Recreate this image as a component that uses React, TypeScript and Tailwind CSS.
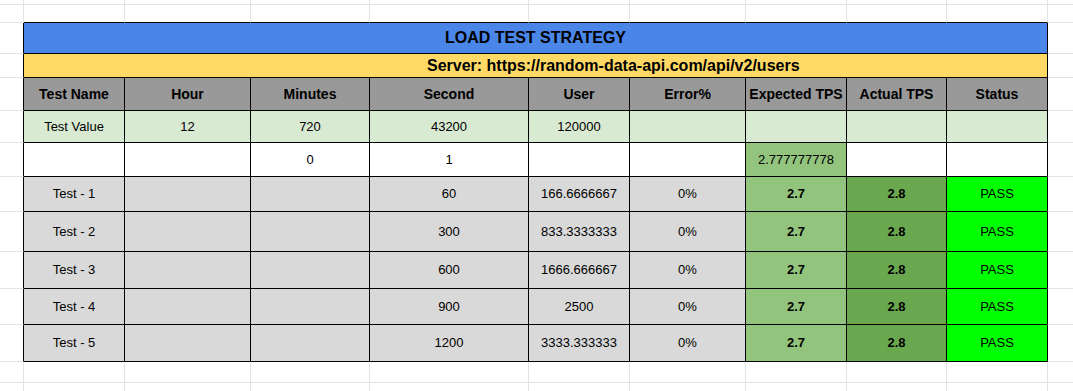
/** Load test strategy sheet, drawn as a spreadsheet grid. */

const COLS = [
  'w-[24px]',
  'w-[101px]',
  'w-[126px]',
  'w-[119px]',
  'w-[159px]',
  'w-[101px]',
  'w-[116px]',
  'w-[101px]',
  'w-[100px]',
  'w-[101px]',
  'w-[26px]',
]

const HEADERS = ['Test Name', 'Hour', 'Minutes', 'Second', 'User', 'Error%', 'Expected TPS', 'Actual TPS', 'Status']

const TESTS = [
  { name: 'Test - 1', sec: '60', user: '166.6666667', h: 'h-[35px]' },
  { name: 'Test - 2', sec: '300', user: '833.3333333', h: 'h-[40px]' },
  { name: 'Test - 3', sec: '600', user: '1666.666667', h: 'h-[37px]' },
  { name: 'Test - 4', sec: '900', user: '2500', h: 'h-[36px]' },
  { name: 'Test - 5', sec: '1200', user: '3333.333333', h: 'h-[37px]' },
]

interface CellProps {
  w: string
  className?: string
  children?: React.ReactNode
}

/** One bordered cell of the table. */
function Cell({ w, className = '', children }: CellProps) {
  return (
    <div className={`${w} shrink-0 h-full flex items-center justify-center border-r border-b border-black ${className}`}>
      {children}
    </div>
  )
}

/** Grey gutter cell left of the table, its right edge is the table's border. */
function LeftGutter() {
  return <div className="w-[24px] shrink-0 h-full border-r border-b border-r-black border-b-[#e2e2e2]" />
}

function RightGutter() {
  return <div className="w-[26px] shrink-0 h-full border-r border-b border-[#e2e2e2]" />
}

/** A row of empty sheet cells outside the table. */
function BlankRow({ h, edge = false }: { h: string; edge?: boolean }) {
  return (
    <div className={`flex ${h}`}>
      {COLS.map((w, i) => (
        <div
          key={i}
          className={`${w} shrink-0 h-full border-r border-b ${
            edge && i > 0 && i < 10 ? 'border-r-[#e2e2e2] border-b-black' : 'border-[#e2e2e2]'
          }`}
        />
      ))}
    </div>
  )
}

export default function App() {
  return (
    <div className="w-[1073px] h-[391px] overflow-hidden bg-white text-black text-[13px] font-['Liberation_Sans',Arial,sans-serif]">
      <BlankRow h="h-[5px]" />
      <BlankRow h="h-[18px]" edge />

      {/* titre */}
      <div className="flex h-[31px]">
        <LeftGutter />
        <div className="w-[1024px] shrink-0 h-full flex items-center justify-center border-r border-b border-black bg-[#4a86e8] text-[16px] font-bold">
          LOAD TEST STRATEGY
        </div>
        <RightGutter />
      </div>

      <div className="flex h-[24px]">
        <LeftGutter />
        <div className="w-[1024px] shrink-0 h-full flex items-center pl-[403px] border-r border-b border-black bg-[#ffd966] text-[16px] font-bold">
          Server: https://random-data-api.com/api/v2/users
        </div>
        <RightGutter />
      </div>

      {/* header */}
      <div className="flex h-[33px]">
        <LeftGutter />
        {HEADERS.map((t, i) => (
          <Cell key={t} w={COLS[i + 1]} className="bg-[#999999] text-[14px] font-bold">
            {t}
          </Cell>
        ))}
        <RightGutter />
      </div>

      <div className="flex h-[32px]">
        <LeftGutter />
        {['Test Value', '12', '720', '43200', '120000', '', '', '', ''].map((t, i) => (
          <Cell key={i} w={COLS[i + 1]} className="bg-[#d9ead3]">
            {t}
          </Cell>
        ))}
        <RightGutter />
      </div>

      <div className="flex h-[34px]">
        <LeftGutter />
        {['', '', '0', '1', '', '', '2.777777778', '', ''].map((t, i) => (
          <Cell key={i} w={COLS[i + 1]} className={i === 6 ? 'bg-[#93c47d]' : 'bg-white'}>
            {t}
          </Cell>
        ))}
        <RightGutter />
      </div>

      {TESTS.map((r) => (
        <div key={r.name} className={`flex ${r.h}`}>
          <LeftGutter />
          {[r.name, '', '', r.sec, r.user, '0%'].map((t, i) => (
            <Cell key={i} w={COLS[i + 1]} className="bg-[#d9d9d9]">
              {t}
            </Cell>
          ))}
          <Cell w={COLS[7]} className="bg-[#93c47d] font-bold">2.7</Cell>
          <Cell w={COLS[8]} className="bg-[#6aa84f] font-bold">2.8</Cell>
          <Cell w={COLS[9]} className="bg-[#00ff00]">PASS</Cell>
          <RightGutter />
        </div>
      ))}

      <BlankRow h="h-[21px]" />
      <BlankRow h="h-[21px]" />
    </div>
  )
}
